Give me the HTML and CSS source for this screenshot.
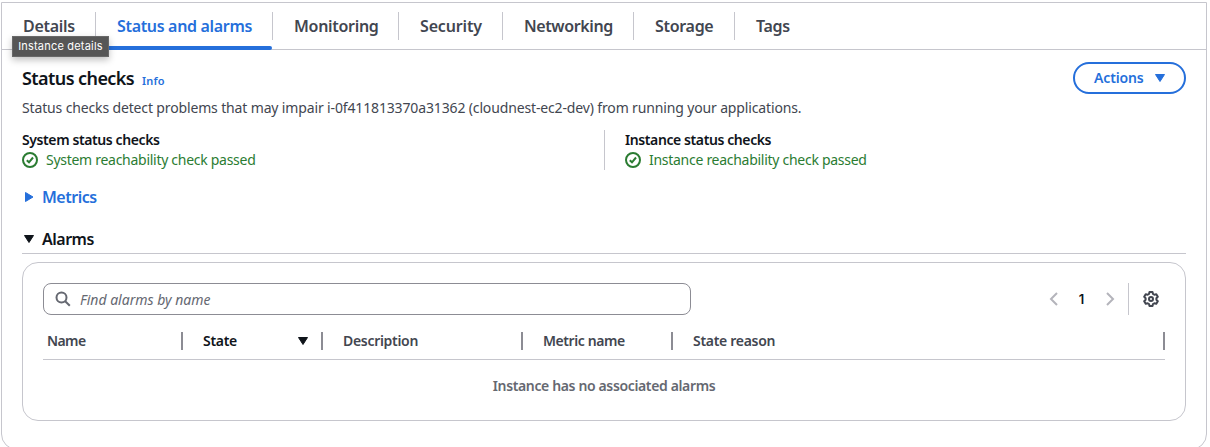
FILE: index.html
```html
<!DOCTYPE html>
<html lang="en">
<head>
<meta charset="utf-8">
<title>Instance status and alarms</title>
<link rel="stylesheet" href="styles.css">
</head>
<body>
<main class="panel">
  <nav class="tabs">
    <a class="tab tab-details"><span>Details</span></a>
    <a class="tab tab-status active"><span>Status and alarms</span></a>
    <a class="tab tab-monitoring"><span>Monitoring</span></a>
    <a class="tab tab-security"><span>Security</span></a>
    <a class="tab tab-networking"><span>Networking</span></a>
    <a class="tab tab-storage"><span>Storage</span></a>
    <a class="tab tab-tags"><span>Tags</span></a>
    <div class="tooltip">Instance details</div>
  </nav>
  <section class="content">
    <header class="header">
      <h2 class="title">Status checks</h2>
      <a class="info">Info</a>
      <button class="actions"><span>Actions</span><svg width="12" height="10" viewBox="0 0 12 10"><path d="M1.5 1.5h9L6 8.500z" fill="currentColor" stroke="currentColor" stroke-linejoin="round"/></svg></button>
    </header>
    <p class="description">Status checks detect problems that may impair i-0f411813370a31362 (cloudnest-ec2-dev) from running your applications.</p>
    <div class="checks">
      <div class="check">
        <h3 class="check-title">System status checks</h3>
        <div class="check-result"><svg class="ok" viewBox="0 0 16 16"><circle cx="8" cy="8" r="7"/><path d="M4.800 8.200 7 10.300 11 5.500"/></svg><span class="result-system">System reachability check passed</span></div>
      </div>
      <div class="check check-second">
        <h3 class="check-title">Instance status checks</h3>
        <div class="check-result"><svg class="ok" viewBox="0 0 16 16"><circle cx="8" cy="8" r="7"/><path d="M4.800 8.200 7 10.300 11 5.500"/></svg><span class="result-instance">Instance reachability check passed</span></div>
      </div>
    </div>
    <div class="expander metrics"><svg width="16" height="16" viewBox="0 0 16 16"><path d="M3.500 3.500v9L11 8z" fill="currentColor" stroke="currentColor" stroke-linejoin="round"/></svg><span>Metrics</span></div>
    <div class="expander alarms"><svg width="16" height="16" viewBox="0 0 16 16"><path d="M2.500 4.500h9L7 11.500z" fill="currentColor" stroke="currentColor" stroke-linejoin="round"/></svg><span>Alarms</span></div>
    <section class="card">
      <div class="toolbar">
        <div class="search">
          <svg width="16" height="16" viewBox="0 0 16 16"><circle cx="6.500" cy="6.500" r="5"/><path d="m10.200 10.200 4.600 4.600"/></svg>
          <span>Find alarms by name</span>
        </div>
        <div class="pager">
          <svg class="chevron" width="16" height="16" viewBox="0 0 16 16"><path d="M11 2 5 8l6 6"/></svg>
          <span class="page">1</span>
          <svg class="chevron" width="16" height="16" viewBox="0 0 16 16"><path d="m5 2 6 6-6 6"/></svg>
        </div>
        <div class="settings">
          <svg width="16" height="16" viewBox="0 0 16 16"><path d="M6.500 1h3l.5 2 1.300.75 2-.55 1.500 2.600L13.400 7.250v1.500l1.400 1.450-1.500 2.600-2-.55L10 13l-.5 2h-3L6 13l-1.300-.75-2 .55-1.500-2.600L2.600 8.750v-1.500L1.200 5.800l1.500-2.600 2 .55L6 3z"/><circle cx="8" cy="8" r="2"/></svg>
        </div>
      </div>
      <div class="thead">
        <div class="th first">Name</div>
        <div class="th sorted"><span>State</span><svg width="12" height="10" viewBox="0 0 12 10"><path d="M1.500 1.500h9L6 8.500z" fill="currentColor" stroke="currentColor" stroke-linejoin="round"/></svg></div>
        <div class="th">Description</div>
        <div class="th metric">Metric name</div>
        <div class="th">State reason</div>
      </div>
      <div class="empty">Instance has no associated alarms</div>
    </section>
  </section>
</main>
</body>
</html>
```
FILE: styles.css
```css
* { box-sizing: border-box; }
body { margin: 0; height: 447px; overflow: hidden; background: #fff; color: #0f141a; font-family: "Noto Sans", sans-serif; font-size: 14px; line-height: 20px; }
h2, h3, p { margin: 0; }
svg { display: block; flex: none; }
span, a, h2, h3, p { white-space: nowrap; }

.panel { margin: 2px 3px 0 1px; height: 448px; border: 1px solid #c6c6cd; border-radius: 0 0 16px 16px; }
.tabs { position: relative; display: flex; height: 47px; border-bottom: 1px solid #c6c6cd; font-size: 16px; font-weight: 600; letter-spacing: -0.3px; color: #424650; }
.tab { position: relative; height: 46px; padding: 13px 0 0 21px; }
.tab:not(:last-of-type) { background: linear-gradient(#c6c6cd, #c6c6cd) right 9px / 1px 28px no-repeat; }
.tab-details { width: 94px; }
.tab-status { width: 177px; letter-spacing: -0.33px; }
.tab-monitoring { width: 126px; }
.tab-security { width: 104px; letter-spacing: -0.15px; }
.tab-networking { width: 131px; letter-spacing: -0.4px; }
.tab-storage { width: 101px; }
.active { color: #256fdb; }
.active::after { content: ""; position: absolute; left: 0; right: 1px; bottom: -1px; height: 4px; border-radius: 2px; background: #256fdb; }
.tooltip { position: absolute; z-index: 2; left: 10px; top: 33px; width: 97px; height: 21px; border: 1px solid #686868; background: #565656; color: #fff; font: 400 11px/19px Inter, sans-serif; text-align: center; letter-spacing: 0.2px; box-shadow: 0 3px 7px rgba(0, 0, 0, 0.25); white-space: nowrap; }

.content { padding: 12px 20px 0; }
.header { display: flex; align-items: center; height: 32px; }
.title { font-size: 18px; font-weight: 600; line-height: 24px; letter-spacing: -0.58px; }
.info { margin: 5px 0 0 8px; font-size: 11px; font-weight: 600; letter-spacing: 0.15px; color: #256fdb; }
.actions { display: flex; align-items: center; gap: 10px; width: 113px; height: 32px; margin-left: auto; padding: 0 0 0 19px; border: 2px solid #256fdb; border-radius: 16px; background: #fff; color: #256fdb; font: inherit; font-weight: 600; letter-spacing: -0.14px; }
.description { margin-top: 4px; letter-spacing: -0.143px; color: #424650; }
.checks { display: grid; grid-template-columns: 582px 1fr; margin-top: 12px; }
.check { height: 40px; }
.check-second { padding-left: 20px; border-left: 1px solid #c6c6cd; }
.check-title { font-size: 14px; font-weight: 600; letter-spacing: -0.4px; }
.check-result { display: flex; align-items: center; gap: 8px; letter-spacing: -0.28px; color: #2b7c32; }
.ok { width: 16px; height: 16px; fill: none; stroke: currentColor; stroke-width: 2; }
.expander { display: flex; align-items: center; gap: 4px; font-size: 16px; font-weight: 600; letter-spacing: -0.5px; }
.metrics { margin-top: 17px; color: #256fdb; }
.alarms { margin-top: 22px; height: 25px; padding-bottom: 4px; border-bottom: 1px solid #c6c6cd; }

.card { height: 159px; margin-top: 8px; padding: 20px; border: 1px solid #c6c6cd; border-radius: 16px; }
.toolbar { display: flex; align-items: center; height: 32px; }
.search { display: flex; align-items: center; gap: 9px; width: 648px; height: 32px; padding-left: 11px; border: 1px solid #8c8c94; border-radius: 8px; color: #656871; font-style: italic; }
.search svg { fill: none; stroke: currentColor; stroke-width: 2; }
.search span { padding-top: 1px; }
.pager { display: flex; align-items: center; margin-left: auto; }
.chevron { fill: none; stroke: #b4b4bb; stroke-width: 2; }
.page { width: 40px; padding-right: 1px; text-align: center; font: 600 13px/20px Inter, sans-serif; }
.settings { display: flex; align-items: center; width: 37px; height: 32px; margin-left: 10px; padding-left: 14px; border-left: 1px solid #c6c6cd; color: #424650; }
.settings svg { fill: none; stroke: currentColor; stroke-width: 2; stroke-linejoin: round; }
.thead { display: grid; grid-template-columns: 140px 140px 200px 150px 492px; height: 45px; padding-top: 8px; border-bottom: 1px solid #c6c6cd; font-weight: 600; letter-spacing: -0.3px; color: #424650; }
.th { display: flex; align-items: center; height: 36px; padding-left: 20px; background: linear-gradient(#8c8c94, #8c8c94) right center / 2px 18px no-repeat; }
.first { padding-left: 4px; letter-spacing: -0.6px; }
.metric { letter-spacing: -0.42px; }
.sorted { justify-content: space-between; padding-right: 14px; color: #0f141a; }
.empty { margin-top: 16px; text-align: center; font-weight: 600; letter-spacing: -0.36px; color: #656871; }
```
